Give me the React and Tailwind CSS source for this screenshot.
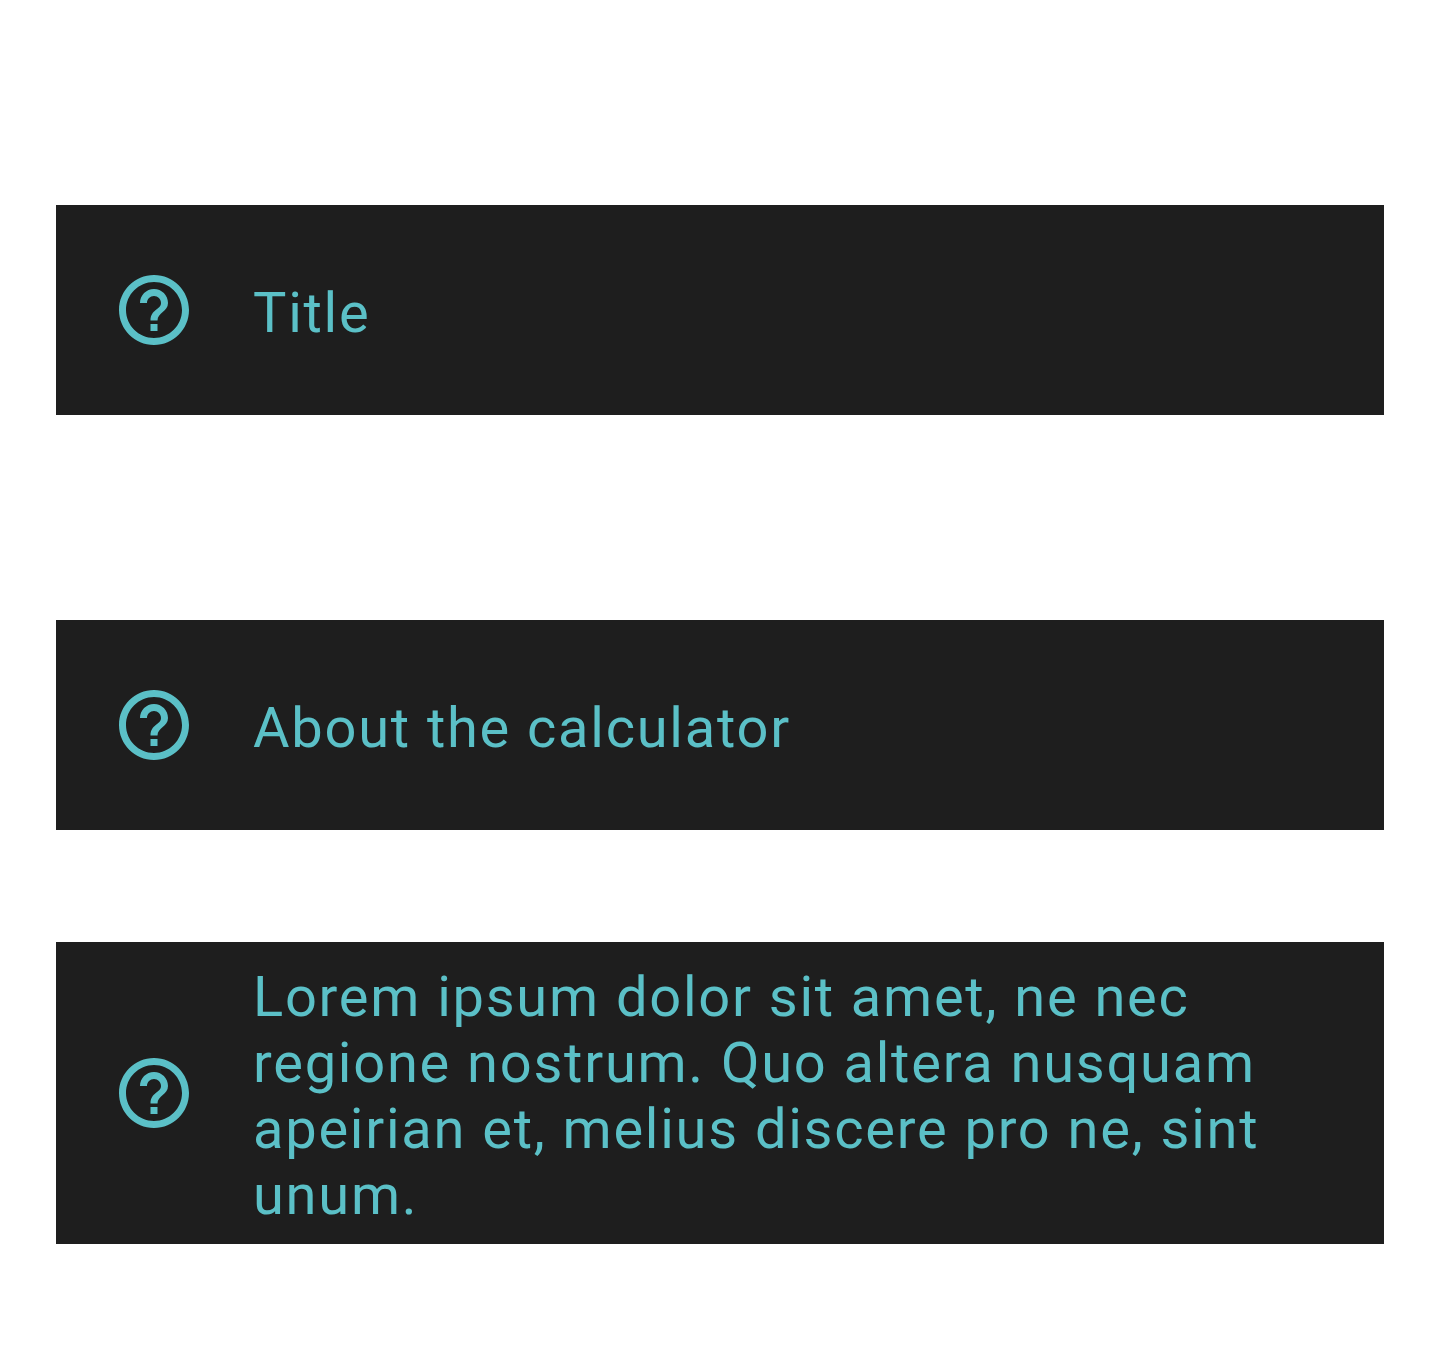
const text = "font-[Roboto,sans-serif] text-[56px] leading-[66px] tracking-[1.75px] [word-spacing:0.4px] text-[#5bc0c7]";

function HelpIcon() {
  return (
    <svg viewBox="0 0 24 24" className="size-[84px] shrink-0 fill-[#5bc0c7]" aria-hidden="true">
      <path d="M11 18h2v-2h-2v2zm1-16C6.48 2 2 6.48 2 12s4.48 10 10 10 10-4.48 10-10S17.52 2 12 2zm0 18c-4.41 0-8-3.59-8-8s3.59-8 8-8 8 3.59 8 8-3.59 8-8 8zm0-14c-2.21 0-4 1.79-4 4h2c0-1.1.9-2 2-2s2 .9 2 2c0 2-3 1.75-3 5h2c0-2.25 3-2.5 3-5 0-2.21-1.79-4-4-4z" />
    </svg>
  );
}

function Row({ className, children }) {
  return (
    <div className={`flex items-center bg-[#1e1e1e] px-14 ${className}`}>
      <HelpIcon />
      <p className={`ml-[57px] pt-1.5 ${text}`}>{children}</p>
    </div>
  );
}

export default function App() {
  return (
    <main className="h-[1356px] w-[1440px] bg-white px-14 pt-[205px]">
      <Row className="h-[210px]">Title</Row>
      <Row className="mt-[205px] h-[210px]">About the calculator</Row>
      <Row className="mt-28 h-[302px]">
        Lorem ipsum dolor sit amet, ne nec regione nostrum. Quo altera nusquam apeirian et, melius discere pro ne, sint unum.
      </Row>
    </main>
  );
}
